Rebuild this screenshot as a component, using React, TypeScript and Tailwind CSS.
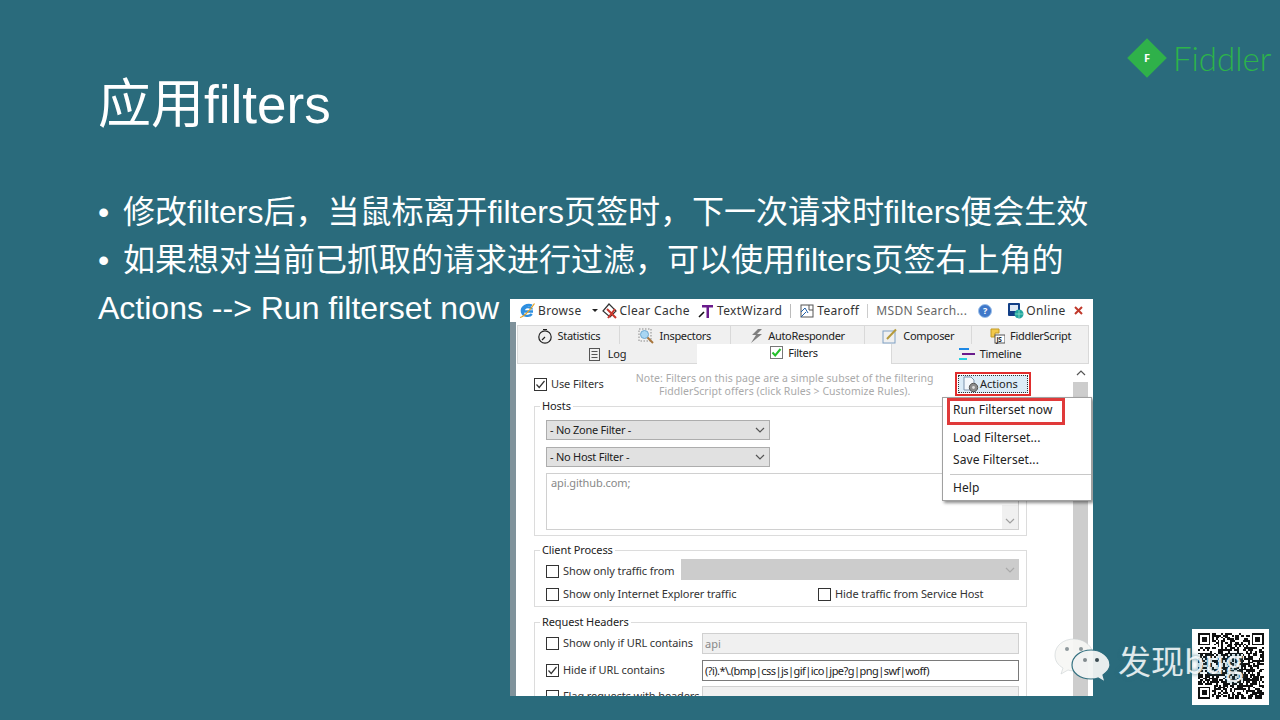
import { useMemo } from "react";

const UI_FONT = "font-['Noto_Sans','Noto_Sans_CJK_SC',sans-serif]";

function Check({ on }: { on?: boolean }) {
  return (
    <span className="w-[13px] h-[13px] border border-[#333] bg-white flex items-center justify-center shrink-0">
      {on && (
        <svg width="11" height="11" viewBox="0 0 11 11" fill="none">
          <path d="M1.5 5.5 L4.2 8.5 L9.5 2" stroke="#333" strokeWidth="1.2" />
        </svg>
      )}
    </span>
  );
}

function Chevron({ color = "#555", className = "" }: { color?: string; className?: string }) {
  return (
    <svg width="10" height="6" viewBox="0 0 10 6" fill="none" className={className}>
      <path d="M1 1 L5 5 L9 1" stroke={color} strokeWidth="1.2" />
    </svg>
  );
}

function Select({ label }: { label: string }) {
  return (
    <div className="w-[224px] h-[20px] bg-[#e1e1e1] border border-[#adadad] flex items-center justify-between pl-[3px] pr-[4px] text-[11px] tracking-[-0.25px] text-[#222]">
      <span>{label}</span>
      <Chevron />
    </div>
  );
}

function Group({ label, className, children }: { label: string; className: string; children: React.ReactNode }) {
  return (
    <div className={`relative w-[493px] border border-[#dcdcdc] ${className}`}>
      <span className="absolute left-[5px] top-[-9px] bg-white px-[2px] text-[11px] leading-[16px] tracking-[-0.1px] text-[#222]">
        {label}
      </span>
      {children}
    </div>
  );
}

function ChkRow({ label, on, className = "" }: { label: string; on?: boolean; className?: string }) {
  return (
    <div className={`flex items-center gap-[4px] text-[11px] text-[#333] ${className}`}>
      <Check on={on} />
      <span className="whitespace-nowrap tracking-[-0.1px]">{label}</span>
    </div>
  );
}

function Tab({ width, icon, label }: { width: string; icon: React.ReactNode; label: string }) {
  return (
    <div className={`${width} gap-[5px] h-full pt-[2px] flex items-center justify-center border-r border-t border-[#d9d9d9] text-[11px] tracking-[-0.3px] text-[#222]`}>
      {icon}
      <span>{label}</span>
    </div>
  );
}

function BrowseIcon() {
  return (
    <svg width="17" height="17" viewBox="0 0 17 17" fill="none">
      <path d="M14 9.5 H4.5 C4.5 4 12.5 4 12.8 7.5 M12.8 12 C10.5 15 4.5 14.5 3 10 C2 5 8 1.5 13 3.5" stroke="#2e8fe0" strokeWidth="2.4" />
      <path d="M1 15.5 C5 15 12 7 15.5 1.5" stroke="#e8a321" strokeWidth="1.2" />
    </svg>
  );
}

function ClearIcon() {
  return (
    <svg width="18" height="18" viewBox="0 0 18 18">
      <path d="M8 2 L15 9 L9 15 L2 9 Z" fill="#fff" stroke="#333" strokeWidth="1.2" />
      <path d="M6 7 L15 16 M14 7 L7 16" stroke="#c8372d" strokeWidth="2" />
    </svg>
  );
}

function TextIcon() {
  return (
    <svg width="16" height="16" viewBox="0 0 16 16">
      <path d="M4 2 H15 V4.5 H11 V15 H8.5 V4.5 H4 Z" fill="#6a1b8c" />
      <path d="M1 14 L6 9" stroke="#111" strokeWidth="1.6" />
    </svg>
  );
}

function TearIcon() {
  return (
    <svg width="14" height="14" viewBox="0 0 14 14" fill="none">
      <rect x="1" y="1" width="12" height="12" stroke="#555" />
      <path d="M1 8 L5 4 L8 9 M1 13 L6 8" stroke="#1f5fa8" />
      <path d="M9 1 V6 H13" stroke="#555" />
    </svg>
  );
}

function HelpIcon() {
  return (
    <span className="w-[14px] h-[14px] rounded-full bg-[#3f78c9] border border-[#9cc0ea] flex items-center justify-center text-[9px] font-bold text-white">
      ?
    </span>
  );
}

function OnlineIcon() {
  return (
    <svg width="17" height="17" viewBox="0 0 17 17">
      <rect x="1" y="1" width="12" height="13" rx="1" fill="#123f86" />
      <rect x="3" y="3" width="8" height="6" fill="#dfe9f5" />
      <circle cx="12" cy="12" r="4.5" fill="#23a6a0" />
      <path d="M8 12 H16 M12 8 V16" stroke="#8fe0c8" strokeWidth="0.8" />
    </svg>
  );
}

function StatIcon() {
  return (
    <svg width="16" height="16" viewBox="0 0 16 16" fill="none">
      <circle cx="8" cy="9" r="6.2" stroke="#222" strokeWidth="1.2" />
      <path d="M6 1.5 H10 M8 9 L5 12" stroke="#222" strokeWidth="1.2" />
    </svg>
  );
}

function InspectIcon() {
  return (
    <svg width="16" height="16" viewBox="0 0 16 16" fill="none">
      <rect x="1" y="1" width="12" height="12" stroke="#8a8a8a" strokeDasharray="1.5 1.5" />
      <circle cx="6.5" cy="6.5" r="4" fill="#a9d6f2" stroke="#6ea8d0" />
      <path d="M9.5 9.5 L15 15" stroke="#a8753c" strokeWidth="2" />
    </svg>
  );
}

function BoltIcon() {
  return (
    <svg width="13" height="14" viewBox="0 0 13 14">
      <path d="M8 0 L2 6 H6 L1 14 L12 5 H7 L12 0 Z" fill="#7f7f7f" />
    </svg>
  );
}

function ComposeIcon() {
  return (
    <svg width="16" height="16" viewBox="0 0 16 16" fill="none">
      <rect x="1" y="3" width="12" height="12" stroke="#7fa0c4" />
      <path d="M5 11 L14 1.5" stroke="#b59a3c" strokeWidth="2" />
    </svg>
  );
}

function ScriptIcon() {
  return (
    <svg width="16" height="16" viewBox="0 0 16 16">
      <path d="M2 1 H10 V5 H6 V9 H2 Z" fill="#f2c84b" stroke="#c39a25" />
      <rect x="6" y="7" width="10" height="8" fill="#fff" stroke="#555" />
      <text x="7.5" y="14" fontSize="6.5" fontWeight="700" fill="#222">JS</text>
    </svg>
  );
}

function LogIcon() {
  return (
    <svg width="11" height="13" viewBox="0 0 11 13" fill="none">
      <rect x="0.5" y="0.5" width="10" height="12" stroke="#555" />
      <path d="M2.5 3.5 H8.5 M2.5 6.5 H8.5 M2.5 9.5 H8.5" stroke="#555" />
    </svg>
  );
}

function TimelineIcon() {
  return (
    <svg width="16" height="13" viewBox="0 0 16 13">
      <rect x="0" y="0" width="10" height="2" fill="#1e88e5" />
      <rect x="3" y="5" width="13" height="2" fill="#6a1b8c" />
      <rect x="0" y="10" width="8" height="2" fill="#26d0e0" />
    </svg>
  );
}

function ActionsIcon() {
  return (
    <svg width="18" height="17" viewBox="0 0 18 17" fill="none" className="shrink-0">
      <path d="M2 1 H9 L12 4 V14 H2 Z" fill="#f5f8fc" stroke="#7c93ad" />
      <circle cx="11.5" cy="11.5" r="4.2" fill="#8b8b8b" stroke="#555" />
      <circle cx="11.5" cy="11.5" r="1.4" fill="#ddd" />
    </svg>
  );
}

function QrCode() {
  const cells = useMemo(() => {
    const n = 37;
    const out: { x: number; y: number }[] = [];
    let seed = 73;
    const inFinder = (x: number, y: number) => (x < 8 && y < 8) || (x >= n - 8 && y < 8) || (x < 8 && y >= n - 8);
    for (let y = 0; y < n; y++) {
      for (let x = 0; x < n; x++) {
        seed = (seed * 1103515245 + 12345) & 0x7fffffff;
        if (!inFinder(x, y) && (seed >> 16) % 100 < 52) out.push({ x, y });
      }
    }
    return out;
  }, []);
  const finders = [
    [0, 0],
    [30, 0],
    [0, 30],
  ];
  return (
    <svg width="66" height="66" viewBox="0 0 37 37" shapeRendering="crispEdges">
      {cells.map((c) => (
        <rect key={`${c.x}-${c.y}`} x={c.x} y={c.y} width="1" height="1" fill="#111" />
      ))}
      {finders.map(([x, y]) => (
        <g key={`${x}-${y}`}>
          <rect x={x} y={y} width="7" height="7" fill="#111" />
          <rect x={x + 1} y={y + 1} width="5" height="5" fill="#fff" />
          <rect x={x + 2} y={y + 2} width="3" height="3" fill="#111" />
        </g>
      ))}
    </svg>
  );
}

function WeChat() {
  return (
    <svg width="58" height="44" viewBox="0 0 58 44" className="opacity-95">
      <path d="M21 1 C10 1 2 8 2 17 C2 23 5 27 10 30 L8 36 L15 32 C18 33 21 33 24 33 L40 14 C37 6 30 1 21 1 Z" fill="#f7f7f5" stroke="#c9d0d2" strokeWidth="0.6" />
      <circle cx="14" cy="11" r="2" fill="#8a9498" />
      <circle cx="28" cy="11" r="2" fill="#8a9498" />
      <path d="M38 12 C27 12 19 19 19 27 C19 35 27 41 38 41 C41 41 43 41 45 40 L52 44 L50 37 C54 34 57 31 57 27 C57 19 49 12 38 12 Z" fill="#f2f5f4" stroke="#2a6b7c" strokeWidth="1.2" />
      <circle cx="32" cy="22" r="2" fill="#7d878b" />
      <circle cx="44" cy="22" r="2" fill="#3c4a50" />
    </svg>
  );
}

function Screenshot() {
  return (
    <div className={`absolute left-[510px] top-[299px] w-[583px] h-[397px] overflow-hidden bg-white flex flex-col ${UI_FONT}`}>
      {/* toolbar */}
      <div className="h-[23px] shrink-0 flex items-center text-[12px] tracking-[0.35px] text-[#333] whitespace-nowrap">
        <div className="w-[9px]" />
        <BrowseIcon />
        <span className="ml-[2px]">Browse</span>
        <span className="ml-[10px] mr-[3px] w-0 h-0 border-x-[3px] border-x-transparent border-t-[3px] border-t-[#222]" />
        <ClearIcon />
        <span className="ml-[1px]">Clear Cache</span>
        <span className="w-[8px]" />
        <TextIcon />
        <span className="ml-[3px]">TextWizard</span>
        <span className="ml-[8px] mr-[9px] w-px h-[14px] bg-[#bbb]" />
        <TearIcon />
        <span className="ml-[3px]">Tearoff</span>
        <span className="mx-[8px] w-px h-[14px] bg-[#ccc]" />
        <span className="text-[#666] w-[100px]">MSDN Search...</span>
        <span className="w-[2px]" />
        <HelpIcon />
        <span className="w-[15px]" />
        <OnlineIcon />
        <span className="ml-[2px]">Online</span>
        <svg width="9" height="9" viewBox="0 0 9 9" className="ml-[8px]">
          <path d="M1 1 L8 8 M8 1 L1 8" stroke="#c0392b" strokeWidth="2" />
        </svg>
      </div>

      <div className="flex-1 min-h-0 flex">
        {/* left edge of the window */}
        <div className="w-[6px] bg-[#7f929b] shrink-0" />
        <div className="flex-1 min-w-0 flex flex-col">
          {/* tabs */}
          <div className="h-[3px] shrink-0" />
          <div className="h-[19px] shrink-0 ml-px w-[572px] flex bg-[#f0f0f0] border-l border-[#d9d9d9]">
            <Tab width="w-[102px]" icon={<StatIcon />} label="Statistics" />
            <Tab width="w-[111px]" icon={<InspectIcon />} label="Inspectors" />
            <Tab width="w-[135px]" icon={<BoltIcon />} label="AutoResponder" />
            <Tab width="w-[107px]" icon={<ComposeIcon />} label="Composer" />
            <Tab width="w-[117px]" icon={<ScriptIcon />} label="FiddlerScript" />
          </div>
          <div className="h-[20px] shrink-0 ml-px w-[572px] flex text-[11px] tracking-[-0.3px] text-[#222]">
            <div className="w-[180px] pt-[1px] bg-[#f0f0f0] border-l border-b border-[#d9d9d9] flex items-center justify-center gap-[8px]">
              <LogIcon />
              <span>Log</span>
            </div>
            <div className="w-[194px] flex items-start justify-center gap-[5px] pt-[2px] bg-white">
              <span className="w-[13px] h-[13px] border border-[#777] flex items-center justify-center">
                <svg width="11" height="11" viewBox="0 0 11 11" fill="none">
                  <path d="M1.5 5.5 L4.2 8.5 L9.5 2" stroke="#22c02a" strokeWidth="2" />
                </svg>
              </span>
              <span className="leading-[14px]">Filters</span>
            </div>
            <div className="flex-1 pt-[1px] bg-[#f0f0f0] border-x border-b border-[#d9d9d9] flex items-center justify-center gap-[5px]">
              <TimelineIcon />
              <span>Timeline</span>
            </div>
          </div>

          {/* filters page */}
          <div className="flex-1 min-h-0 flex">
            <div className="w-[557px] shrink-0 pl-[18px] flex flex-col">
              <div className="h-[42px] shrink-0 relative flex items-start">
                <ChkRow label="Use Filters" on className="mt-[12px]" />
                <div className="ml-[31px] mt-[8px] w-[300px] text-center text-[10.5px] leading-[13px] tracking-[0.05px] text-[#aaa] whitespace-nowrap">
                  <div>Note: Filters on this page are a simple subset of the filtering</div>
                  <div>FiddlerScript offers (click Rules &gt; Customize Rules).</div>
                </div>
                <div className="absolute left-[421px] top-[8px] w-[76px] h-[24px] border-2 border-[#e02d2d] p-[1px]">
                  <div className="h-full border border-dotted border-[#333] bg-[#dcecf8] flex items-center pl-[3px] gap-0 text-[11px] text-[#222]">
                    <ActionsIcon />
                    <span>Actions</span>
                  </div>
                </div>
              </div>

              <Group label="Hosts" className="h-[130px] pt-[13px] pl-[11px] flex flex-col gap-[7px] shrink-0">
                <Select label="- No Zone Filter -" />
                <Select label="- No Host Filter -" />
                <div className="relative w-[473px] h-[57px] border border-[#d0d0d0] -mt-[1px] px-[4px] py-[1px] text-[11px] tracking-[-0.1px] text-[#888]">
                  api.github.com;
                  <div className="absolute right-0 bottom-0 w-[16px] h-[24px] bg-[#f0f0f0] flex items-end justify-center pb-[5px]">
                    <Chevron color="#a0a0a0" />
                  </div>
                </div>
              </Group>

              <Group label="Client Process" className="mt-[14px] h-[57px] shrink-0 pt-[8px] pl-[11px] flex flex-col">
                <div className="flex items-center h-[21px]">
                  <ChkRow label="Show only traffic from" className="w-[135px] mt-[3px]" />
                  <div className="w-[338px] h-[21px] bg-[#cccccc] flex items-center justify-end pr-[4px]">
                    <Chevron color="#aaa" />
                  </div>
                </div>
                <div className="flex items-center mt-[6px]">
                  <ChkRow label="Show only Internet Explorer traffic" className="w-[272px]" />
                  <ChkRow label="Hide traffic from Service Host" />
                </div>
              </Group>

              <Group label="Request Headers" className="mt-[15px] h-[90px] shrink-0 pt-[10px] pl-[11px] flex flex-col gap-[6px]">
                <div className="flex items-center h-[21px]">
                  <ChkRow label="Show only if URL contains" className="w-[156px]" />
                  <div className="w-[317px] h-[21px] bg-[#f0f0f0] border border-[#d0d0d0] px-[2px] text-[11px] leading-[19px] text-[#888]">api</div>
                </div>
                <div className="flex items-center h-[21px]">
                  <ChkRow label="Hide if URL contains" on className="w-[156px]" />
                  <div className="w-[317px] h-[21px] bg-white border border-[#7a7a7a] px-[2px] text-[11px] leading-[19px] tracking-[-0.55px] text-[#222] whitespace-nowrap">
                    {"(?i).*\\.(bmp|css|js|gif|ico|jpe?g|png|swf|woff)"}
                  </div>
                </div>
                <div className="flex items-center h-[21px] -mt-[1px]">
                  <ChkRow label="Flag requests with headers" className="w-[156px]" />
                  <div className="w-[317px] h-[21px] bg-[#f0f0f0] border border-[#d0d0d0]" />
                </div>
              </Group>
            </div>

            {/* scrollbar */}
            <div className="w-[15px] flex flex-col">
              <div className="h-[18px] flex items-center justify-center">
                <Chevron color="#555" className="rotate-180" />
              </div>
              <div className="flex-1 bg-[#cdcdcd]" />
            </div>
          </div>
        </div>
        <div className="w-[5px] shrink-0" />
      </div>

      {/* Actions menu */}
      <div className="absolute left-[432px] top-[98px] w-[150px] h-[104px] bg-white border border-[#a0a0a0] shadow-[2px_2px_3px_rgba(0,0,0,0.45)] text-[12px] tracking-[0.1px] text-[#222] flex flex-col">
        <div className="relative h-[27px] pl-[10px] flex items-center">
          <span className="-mt-[3px]">Run Filterset now</span>
          <span className="absolute left-[4px] top-0 w-[118px] h-[27px] border-[3px] border-[#e03a3a]" />
        </div>
        <div className="h-[22px] mt-[2px] pl-[10px] flex items-center">Load Filterset...</div>
        <div className="h-[22px] pl-[10px] flex items-center">Save Filterset...</div>
        <div className="h-px bg-[#c8c8c8] ml-[7px] my-[3px]" />
        <div className="h-[20px] pl-[10px] flex items-center">Help</div>
      </div>
    </div>
  );
}

export default function App() {
  return (
    <div className="relative w-[1280px] h-[720px] overflow-hidden bg-[#2a6b7c] text-white font-['Liberation_Sans','Noto_Sans_CJK_SC',sans-serif]">
      <div className="pl-[98px] flex flex-col">
        <h1 className="mt-[71px] text-[53px] leading-[68px] font-normal">应用filters</h1>
        <ul className="mt-[49px] text-[32px] leading-[48px]">
          <li className="flex whitespace-nowrap">
            <span className="w-[25px]">•</span>修改filters后，当鼠标离开filters页签时，下一次请求时filters便会生效
          </li>
          <li className="flex whitespace-nowrap">
            <span className="w-[25px]">•</span>如果想对当前已抓取的请求进行过滤，可以使用filters页签右上角的
          </li>
        </ul>
        <p className="text-[32px] leading-[48px] whitespace-nowrap">Actions --&gt; Run filterset now</p>
      </div>

      <Screenshot />

      {/* Fiddler logo */}
      <div className="absolute left-[1127px] top-[36px] flex items-center">
        <div className="relative w-[40px] h-[44px] flex items-center justify-center">
          <div className="absolute w-[28px] h-[28px] rotate-45 bg-[#2fb14a]" />
          <span className="relative text-[11px] font-bold text-white font-['Open_Sans']">F</span>
        </div>
        <span className="ml-[6px] text-[33px] leading-[44px] font-light text-[#2db34a] font-['Lato']">Fiddler</span>
      </div>

      {/* watermark */}
      <div className="absolute left-[1192px] top-[629px] w-[77px] h-[76px] bg-white flex justify-center pt-[4px]">
        <QrCode />
      </div>
      <div className="absolute left-[1053px] top-[638px] flex items-center">
        <WeChat />
        <span className="ml-[7px] text-[33px] leading-[44px] text-white/85 [text-shadow:0_0_4px_rgba(42,107,124,0.9)] font-['Noto_Sans_CJK_SC',sans-serif] whitespace-nowrap">发现bug</span>
      </div>
    </div>
  );
}
